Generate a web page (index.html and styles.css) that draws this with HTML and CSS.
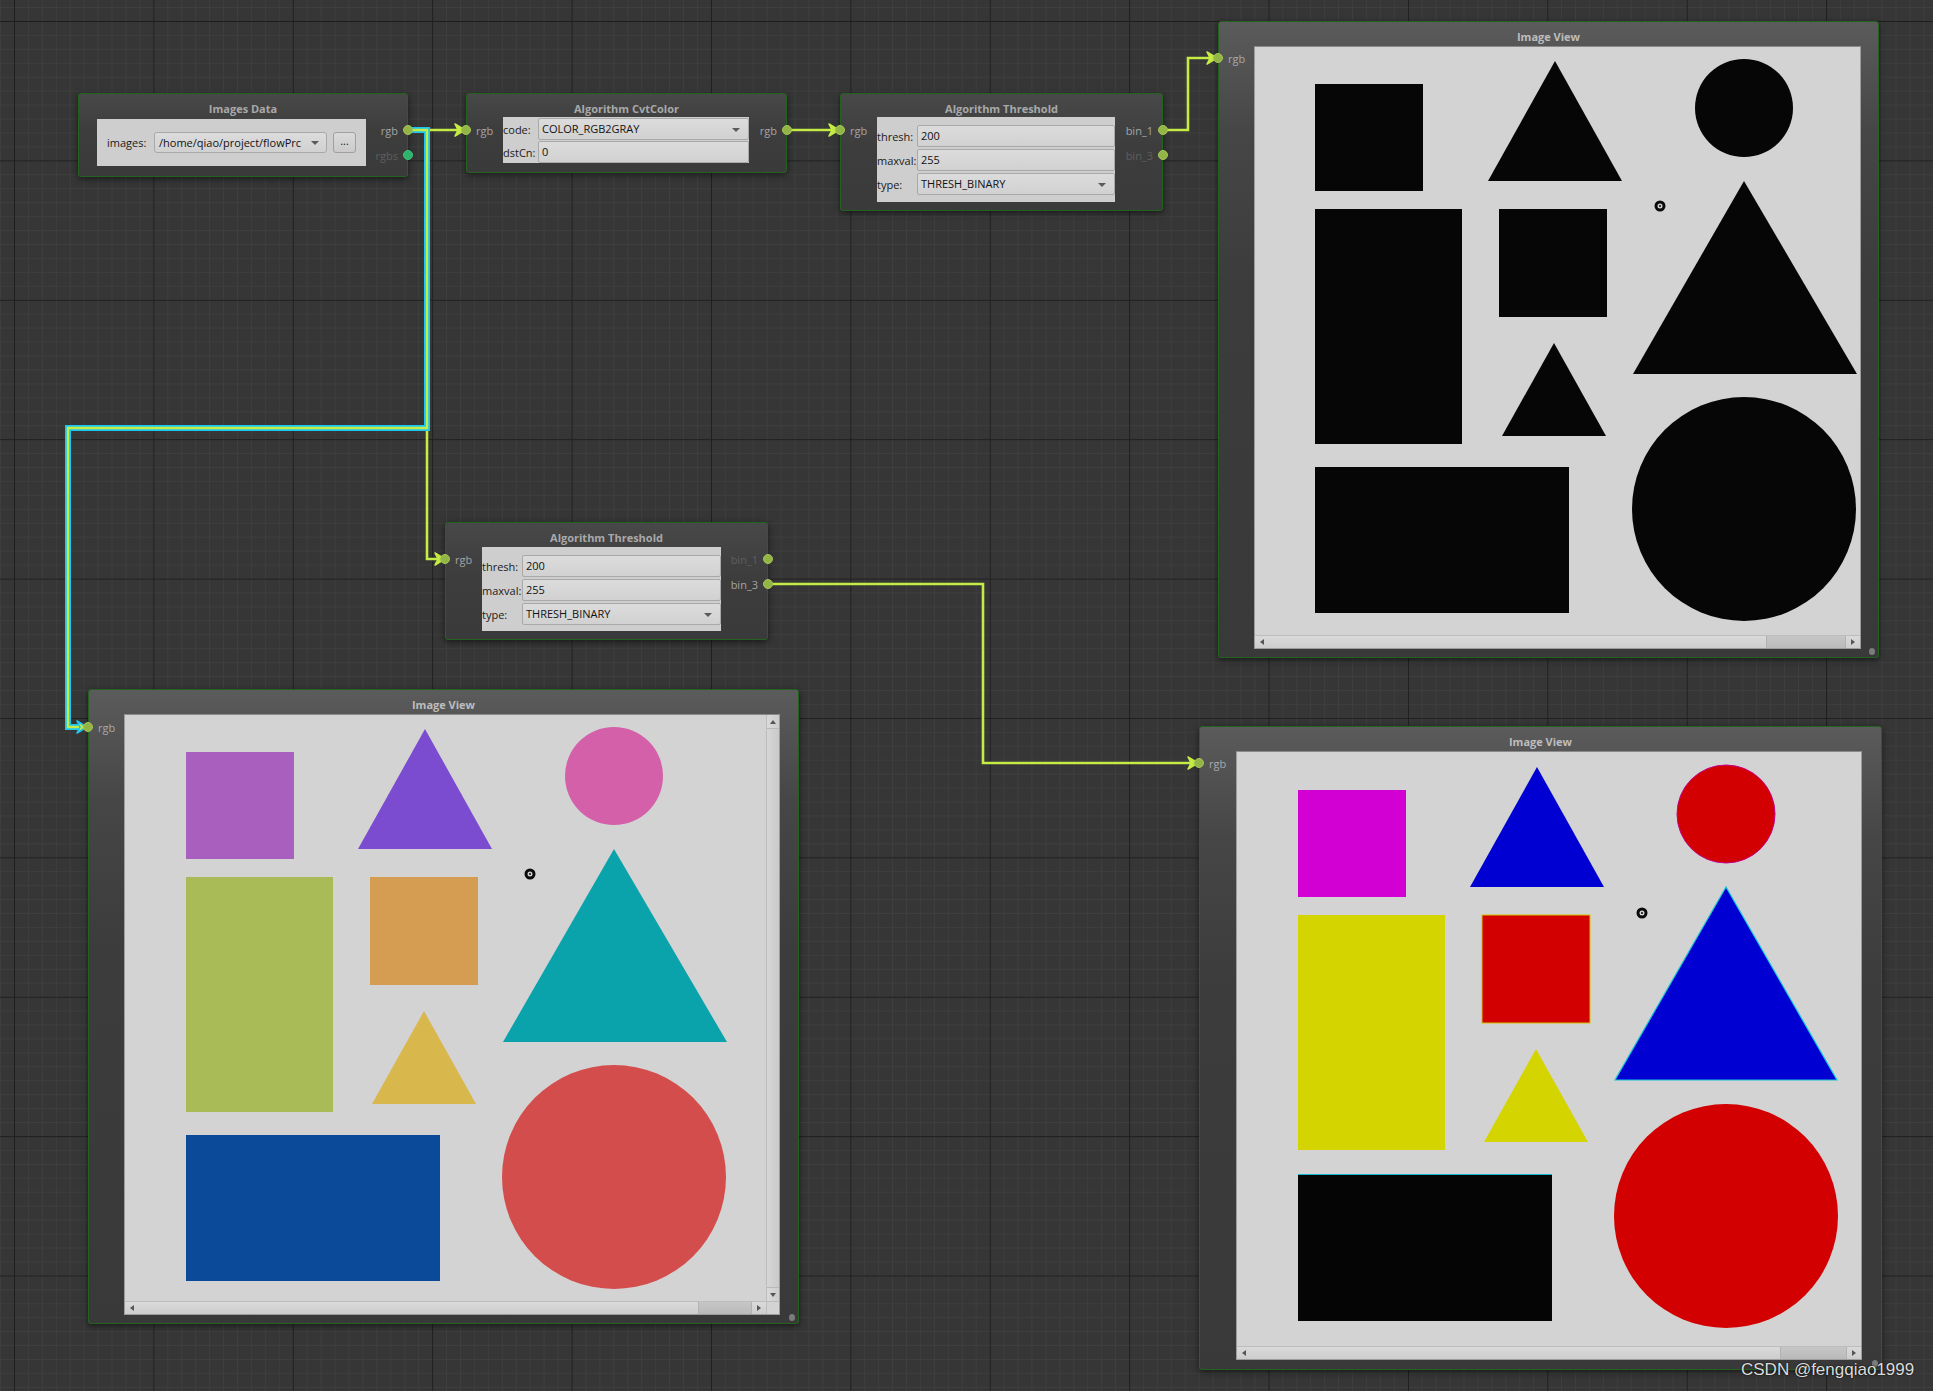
FILE: index.html
```html
<!DOCTYPE html>
<html>
<head>
<meta charset="utf-8">
<title>Flow</title>
<link rel="stylesheet" href="styles.css">
</head>
<body>
<div class="canvas">
  <svg class="wires" width="1933" height="1391" viewBox="0 0 1933 1391">
    <g class="wire">
      <path d="M408 130 H427 V559 H440"/>
      <path d="M408 130 H460"/>
      <path d="M787 130 H834"/>
      <path d="M1162 130 H1188 V58 H1212"/>
      <path d="M768 584 H983 V763 H1193"/>
    </g>
    <path class="sel-outline" d="M408 130 H427 V428 H68 V727 H82"/>
    <path class="sel-core" d="M408 130 H427 V428 H68 V727 H82"/>
    <g class="arrow">
      <polygon points="455,124 465,130 455,136 458,130"/>
      <polygon points="435,553 445,559 435,565 438,559"/>
      <polygon points="829,124 839,130 829,136 832,130"/>
      <polygon points="1207,52 1217,58 1207,64 1210,58"/>
      <polygon points="1188,757 1198,763 1188,769 1191,763"/>
    </g>
    <polygon class="arrow-sel" points="77,721 87,727 77,733 80,727"/>
  </svg>

  <!-- Images Data -->
  <div class="node algo n1">
    <div class="title">Images Data</div>
    <div class="body">
      <div class="ports in"></div>
      <div class="panel row-panel">
        <span class="lbl">images:</span>
        <div class="field combo path">/home/qiao/project/flowPrc</div>
        <div class="btn">...</div>
      </div>
      <div class="ports out">
        <div class="port"><span>rgb</span><i class="dot"></i></div>
        <div class="port dim"><span>rgbs</span><i class="dot green"></i></div>
      </div>
    </div>
  </div>

  <!-- CvtColor -->
  <div class="node algo n2">
    <div class="title">Algorithm CvtColor</div>
    <div class="body">
      <div class="ports in">
        <div class="port"><i class="dot"></i><span>rgb</span></div>
      </div>
      <div class="panel form">
        <span class="lbl">code:</span><div class="field combo">COLOR_RGB2GRAY</div>
        <span class="lbl">dstCn:</span><div class="field">0</div>
      </div>
      <div class="ports out">
        <div class="port"><span>rgb</span><i class="dot"></i></div>
      </div>
    </div>
  </div>

  <!-- Threshold top -->
  <div class="node algo n3">
    <div class="title">Algorithm Threshold</div>
    <div class="body">
      <div class="ports in">
        <div class="port"><i class="dot"></i><span>rgb</span></div>
      </div>
      <div class="panel form">
        <span class="lbl">thresh:</span><div class="field">200</div>
        <span class="lbl">maxval:</span><div class="field">255</div>
        <span class="lbl">type:</span><div class="field combo">THRESH_BINARY</div>
      </div>
      <div class="ports out">
        <div class="port"><span>bin_1</span><i class="dot"></i></div>
        <div class="port dim"><span>bin_3</span><i class="dot"></i></div>
      </div>
    </div>
  </div>

  <!-- Threshold middle -->
  <div class="node algo n4">
    <div class="title">Algorithm Threshold</div>
    <div class="body">
      <div class="ports in">
        <div class="port"><i class="dot"></i><span>rgb</span></div>
      </div>
      <div class="panel form">
        <span class="lbl">thresh:</span><div class="field">200</div>
        <span class="lbl">maxval:</span><div class="field">255</div>
        <span class="lbl">type:</span><div class="field combo">THRESH_BINARY</div>
      </div>
      <div class="ports out">
        <div class="port dim"><span>bin_1</span><i class="dot"></i></div>
        <div class="port"><span>bin_3</span><i class="dot"></i></div>
      </div>
    </div>
  </div>

  <!-- Image View top right (binary) -->
  <div class="node viewnode tr">
    <div class="title">Image View</div>
    <div class="body">
      <div class="ports in">
        <div class="port"><i class="dot"></i><span>rgb</span></div>
      </div>
      <div class="view">
        <div class="content">
          <svg class="pic bin" width="605" height="588" viewBox="0 0 605 588">
            <rect x="60" y="37" width="108" height="107"/>
            <polygon points="300,14 233,134 367,134"/>
            <circle cx="489" cy="61" r="49"/>
            <rect x="60" y="162" width="147" height="235"/>
            <rect x="244" y="162" width="108" height="108"/>
            <polygon points="489,134 378,327 602,327"/>
            <polygon points="299,296 247,389 351,389"/>
            <rect x="60" y="420" width="254" height="146"/>
            <circle cx="489" cy="462" r="112"/>
            <circle class="ring" cx="405" cy="159" r="4"/>
            <circle class="ringdot" cx="405" cy="159" r="1"/>
          </svg>
        </div>
        <div class="hscroll">
          <div class="sbtn"><i class="tri-l"></i></div>
          <div class="track"><div class="thumb t-tr"></div></div>
          <div class="sbtn"><i class="tri-r"></i></div>
        </div>
      </div>
      <div></div>
    </div>
    <i class="grip"></i>
  </div>

  <!-- Image View bottom left (colour) -->
  <div class="node viewnode bl">
    <div class="title">Image View</div>
    <div class="body">
      <div class="ports in">
        <div class="port"><i class="dot"></i><span>rgb</span></div>
      </div>
      <div class="view grid2">
        <div class="content">
          <svg class="pic" width="641" height="586" viewBox="0 0 641 586">
            <rect class="c-sq" x="61" y="37" width="108" height="107"/>
            <polygon class="c-tri" points="300,14 233,134 367,134"/>
            <circle class="c-circ" cx="489" cy="61" r="49"/>
            <rect class="c-tall" x="61" y="162" width="147" height="235"/>
            <rect class="c-sq2" x="245" y="162" width="108" height="108"/>
            <polygon class="c-btri" points="489,134 378,327 602,327"/>
            <polygon class="c-stri" points="299,296 247,389 351,389"/>
            <rect class="c-wide" x="61" y="420" width="254" height="146"/>
            <circle class="c-bcirc" cx="489" cy="462" r="112"/>
            <circle class="ring" cx="405" cy="159" r="4"/>
            <circle class="ringdot" cx="405" cy="159" r="1"/>
          </svg>
        </div>
        <div class="vscroll">
          <div class="sbtn v"><i class="tri-u"></i></div>
          <div class="vtrack"><div class="vthumb"></div></div>
          <div class="sbtn v"><i class="tri-d"></i></div>
        </div>
        <div class="hscroll">
          <div class="sbtn"><i class="tri-l"></i></div>
          <div class="track"><div class="thumb t-bl"></div></div>
          <div class="sbtn"><i class="tri-r"></i></div>
        </div>
        <div class="corner"></div>
      </div>
      <div></div>
    </div>
    <i class="grip"></i>
  </div>

  <!-- Image View bottom right (saturated) -->
  <div class="node viewnode br">
    <div class="title">Image View</div>
    <div class="body">
      <div class="ports in">
        <div class="port"><i class="dot"></i><span>rgb</span></div>
      </div>
      <div class="view">
        <div class="content">
          <svg class="pic" width="624" height="594" viewBox="0 0 624 594">
            <rect class="s-sq" x="61" y="38" width="108" height="107"/>
            <polygon class="s-tri" points="300,15 233,135 367,135"/>
            <circle class="s-circ" cx="489" cy="62" r="49"/>
            <rect class="s-tall" x="61" y="163" width="147" height="235"/>
            <rect class="s-sq2" x="245" y="163" width="108" height="108"/>
            <polygon class="s-btri" points="489,135 378,328 600,328"/>
            <polygon class="s-stri" points="299,297 247,390 351,390"/>
            <rect class="s-wide" x="61" y="422" width="254" height="147"/>
            <line class="s-edge" x1="61" y1="422.5" x2="315" y2="422.5"/>
            <circle class="s-bcirc" cx="489" cy="464" r="112"/>
            <circle class="ring" cx="405" cy="161" r="4"/>
            <circle class="ringdot" cx="405" cy="161" r="1"/>
          </svg>
        </div>
        <div class="hscroll">
          <div class="sbtn"><i class="tri-l"></i></div>
          <div class="track"><div class="thumb t-br"></div></div>
          <div class="sbtn"><i class="tri-r"></i></div>
        </div>
      </div>
      <div></div>
    </div>
    <i class="grip"></i>
  </div>

  <div class="watermark">CSDN @fengqiao1999</div>
</div>
</body>
</html>
```

FILE: styles.css
```css
* { box-sizing: border-box; }
html, body { margin: 0; padding: 0; background: #363636; }
body {
  font-family: "Open Sans", "Noto Sans", sans-serif;
  font-size: 11px;
}

.canvas {
  position: relative;
  width: 1933px;
  height: 1391px;
  overflow: hidden;
  background-color: #363636;
  background-image:
    linear-gradient(to right, #1e1e1e 1px, transparent 1px),
    linear-gradient(to bottom, #1e1e1e 1px, transparent 1px),
    linear-gradient(to right, #3e3e3e 1px, transparent 1px),
    linear-gradient(to bottom, #3e3e3e 1px, transparent 1px);
  background-size: 139.4px 139.4px, 139.4px 139.4px, 13.94px 13.94px, 13.94px 13.94px;
  background-position: 14px 21px, 14px 21px, 14px 21px, 14px 21px;
}

/* ---------- wires ---------- */
.wires { position: absolute; left: 0; top: 0; z-index: 0; }
.wire path { fill: none; stroke: #c4ec44; stroke-width: 2.6; }
.sel-outline { fill: none; stroke: #1cc6f2; stroke-width: 6; }
.sel-core { fill: none; stroke: #c4ec44; stroke-width: 2.4; }
.arrow polygon { fill: #c4ec44; stroke: #c4ec44; stroke-width: 1.5; stroke-linejoin: round; }
.arrow-sel { fill: #c4ec44; stroke: #1cc6f2; stroke-width: 1.6; stroke-linejoin: round; }

/* ---------- nodes ---------- */
.node {
  position: absolute;
  z-index: 1;
  display: flex;
  flex-direction: column;
  border: 1px solid #24621f;
  border-radius: 3px;
  box-shadow: 0 2px 6px rgba(0, 0, 0, 0.55);
}
.algo { background: linear-gradient(#484848, #3d3d3d 45%, #3a3a3a); }
.viewnode { background: linear-gradient(#5b5b5b, #464646 110px, #3c3c3c 260px, #393939); }

.title {
  flex: none;
  text-align: center;
  font-weight: 700;
  color: #a9a9a9;
  font-size: 11px;
  line-height: 16px;
  padding-top: 7px;
  white-space: nowrap;
}
.viewnode .title { color: #bdbdbd; }

.body { display: grid; align-items: start; }

.ports { display: flex; flex-direction: column; gap: 3px; }
.port {
  height: 22px;
  display: flex;
  align-items: center;
  gap: 5px;
  color: #a4a4a4;
  white-space: nowrap;
}
.port.dim { color: #5e5e5e; }
.ports.out .port { justify-content: flex-end; }
.ports.out .dot { margin-right: -6px; }
.ports.in .dot { margin-left: -6px; }
.dot {
  display: block;
  width: 10px;
  height: 10px;
  border-radius: 50%;
  background: #92b545;
  border: 1px solid #a6c55a;
  flex: none;
}
.dot.green { background: #2db36a; border-color: #3cc47a; }

.panel { background: #cecece; color: #161616; }
.lbl { white-space: nowrap; color: #1a1a1a; }

.field {
  position: relative;
  height: 22px;
  line-height: 20px;
  padding-left: 3px;
  border: 1px solid #a9a9a9;
  border-radius: 2px;
  background: linear-gradient(#dcdcdc, #d1d1d1);
  color: #121212;
  white-space: nowrap;
  overflow: hidden;
}
.combo::after {
  content: "";
  position: absolute;
  right: 8px;
  top: 9px;
  border-left: 4px solid transparent;
  border-right: 4px solid transparent;
  border-top: 4px solid #5a5a5a;
}

/* Images Data */
.n1 { left: 78px; top: 93px; width: 330px; height: 84px; }
.n1 .title { height: 25px; }
.n1 .body { grid-template-columns: 18px 269px 41px; }
.n1 .ports.out { padding-top: 0; }
.row-panel {
  height: 47px;
  display: flex;
  align-items: center;
  padding: 0 10px;
}
.row-panel .lbl { width: 47px; }
.field.path { width: 173px; height: 21px; line-height: 19px; padding-left: 4px; border-radius: 3px; padding-right: 18px; }
.field.path::after { top: 8px; right: 7px; }
.btn {
  margin-left: 6px;
  width: 23px;
  height: 21px;
  border: 1px solid #a0a0a0;
  border-radius: 3px;
  background: linear-gradient(#dadada, #cbcbcb);
  text-align: center;
  line-height: 16px;
  color: #222;
}

.form {
  display: grid;
  align-content: start;
  align-items: center;
}

/* CvtColor */
.n2 { left: 466px; top: 93px; width: 321px; height: 80px; }
.n2 .title { height: 23px; }
.n2 .body { grid-template-columns: 36px 246px 37px; }
.n2 .ports { padding-top: 2px; }
.n2 .form { height: 46px; grid-template-columns: 35px 1fr; row-gap: 1px; padding-top: 1px; }
.n2 .field { height: 22px; }

/* Threshold top */
.n3 { left: 840px; top: 93px; width: 323px; height: 118px; }
.n3 .title { height: 23px; }
.n3 .body { grid-template-columns: 36px 238px 47px; }
.n3 .ports { padding-top: 2px; }
.n3 .form, .n4 .form { height: 85px; grid-template-columns: 40px 1fr; row-gap: 2px; padding-top: 8px; }

/* Threshold middle */
.n4 { left: 445px; top: 522px; width: 323px; height: 118px; }
.n4 .title { height: 24px; }
.n4 .body { grid-template-columns: 36px 239px 46px; }
.n4 .ports { padding-top: 1px; }
.n4 .form { height: 84px; }

/* ---------- image views ---------- */
.tr { left: 1218px; top: 21px; width: 661px; height: 637px; }
.tr .title { height: 24px; }
.tr .body { grid-template-columns: 35px 607px 17px; }
.tr .view { height: 603px; }
.tr .ports { padding-top: 1px; }

.bl { left: 88px; top: 689px; width: 711px; height: 635px; }
.bl .title { height: 24px; }
.bl .body { grid-template-columns: 35px 656px 18px; }
.bl .view { height: 601px; }
.bl .ports { padding-top: 2px; }

.br { left: 1199px; top: 726px; width: 683px; height: 644px; }
.br .title { height: 24px; }
.br .body { grid-template-columns: 36px 626px 19px; }
.br .view { height: 609px; }
.br .ports { padding-top: 1px; }

.viewnode .port { color: #a8a8a8; }

.view {
  display: flex;
  flex-direction: column;
  border: 1px solid #9c9c9c;
  border-top-color: #8a8a8a;
  background: #d3d3d3;
  overflow: hidden;
}
.view.grid2 {
  display: grid;
  grid-template-columns: 1fr 13px;
  grid-template-rows: 1fr 13px;
}
.content { flex: 1; position: relative; overflow: hidden; min-height: 0; }
.pic { display: block; }

.hscroll {
  flex: none;
  height: 13px;
  display: flex;
  border-top: 1px solid #bdbdbd;
  background: linear-gradient(#dadada, #cdcdcd);
}
.track { flex: 1; display: flex; justify-content: flex-end; }
.thumb {
  height: 100%;
  background: linear-gradient(#c6c6c6, #bababa);
  border-left: 1px solid #b2b2b2;
  border-right: 1px solid #b2b2b2;
}
.t-tr { width: 80px; }
.t-bl { width: 54px; }
.t-br { width: 67px; }
.sbtn {
  width: 14px;
  flex: none;
  display: flex;
  align-items: center;
  justify-content: center;
}
.sbtn.v { width: auto; height: 13px; }
.tri-l { border-top: 3px solid transparent; border-bottom: 3px solid transparent; border-right: 4px solid #555; }
.tri-r { border-top: 3px solid transparent; border-bottom: 3px solid transparent; border-left: 4px solid #555; }
.tri-u { border-left: 3px solid transparent; border-right: 3px solid transparent; border-bottom: 4px solid #555; }
.tri-d { border-left: 3px solid transparent; border-right: 3px solid transparent; border-top: 4px solid #555; }

.vscroll {
  display: flex;
  flex-direction: column;
  border-left: 1px solid #bdbdbd;
  background: linear-gradient(to right, #dadada, #cdcdcd);
}
.vtrack { flex: 1; display: flex; padding: 0; }
.vthumb {
  flex: 1;
  border-top: 1px solid #b9b9b9;
  border-bottom: 1px solid #b9b9b9;
  background: linear-gradient(to right, #d6d6d6, #cacaca);
}
.corner { background: #d3d3d3; border-top: 1px solid #bdbdbd; border-left: 1px solid #bdbdbd; }

.grip {
  position: absolute;
  right: 3px;
  bottom: 2px;
  width: 6px;
  height: 7px;
  border-radius: 50%;
  background: #7c7c7c;
}

/* shapes */
.bin rect, .bin polygon, .bin circle { fill: #060606; }
.ring { fill: none; stroke: #0a0a0a; stroke-width: 3; }
.bin .ring { fill: none; }
.ringdot { fill: #0a0a0a; }

.c-sq { fill: #a95fbd; }
.c-tri { fill: #7b4bd0; }
.c-circ { fill: #d560aa; }
.c-tall { fill: #a9bb56; }
.c-sq2 { fill: #d59d51; }
.c-btri { fill: #0aa3ab; }
.c-stri { fill: #d8b84d; }
.c-wide { fill: #0a4a99; }
.c-bcirc { fill: #d44d4d; }

.s-sq { fill: #d200d2; }
.s-tri { fill: #0000d2; }
.s-circ { fill: #d20000; stroke: #c8008a; stroke-width: 1; }
.s-tall { fill: #d4d400; }
.s-sq2 { fill: #d20000; stroke: #d4c400; stroke-width: 1; }
.s-btri { fill: #0000d2; stroke: #16c8d8; stroke-width: 1.2; }
.s-stri { fill: #d4d400; }
.s-wide { fill: #050505; }
.s-edge { stroke: #10b8d0; stroke-width: 1; }
.s-bcirc { fill: #d20000; }

.watermark {
  position: absolute;
  z-index: 3;
  left: 1741px;
  top: 1360px;
  font-family: "Liberation Sans", Arial, sans-serif;
  font-size: 17px;
  line-height: 20px;
  color: #dcdcdc;
  text-shadow: 0 0 2px #1a1a1a, 0 0 1px #000;
  white-space: nowrap;
}
```
